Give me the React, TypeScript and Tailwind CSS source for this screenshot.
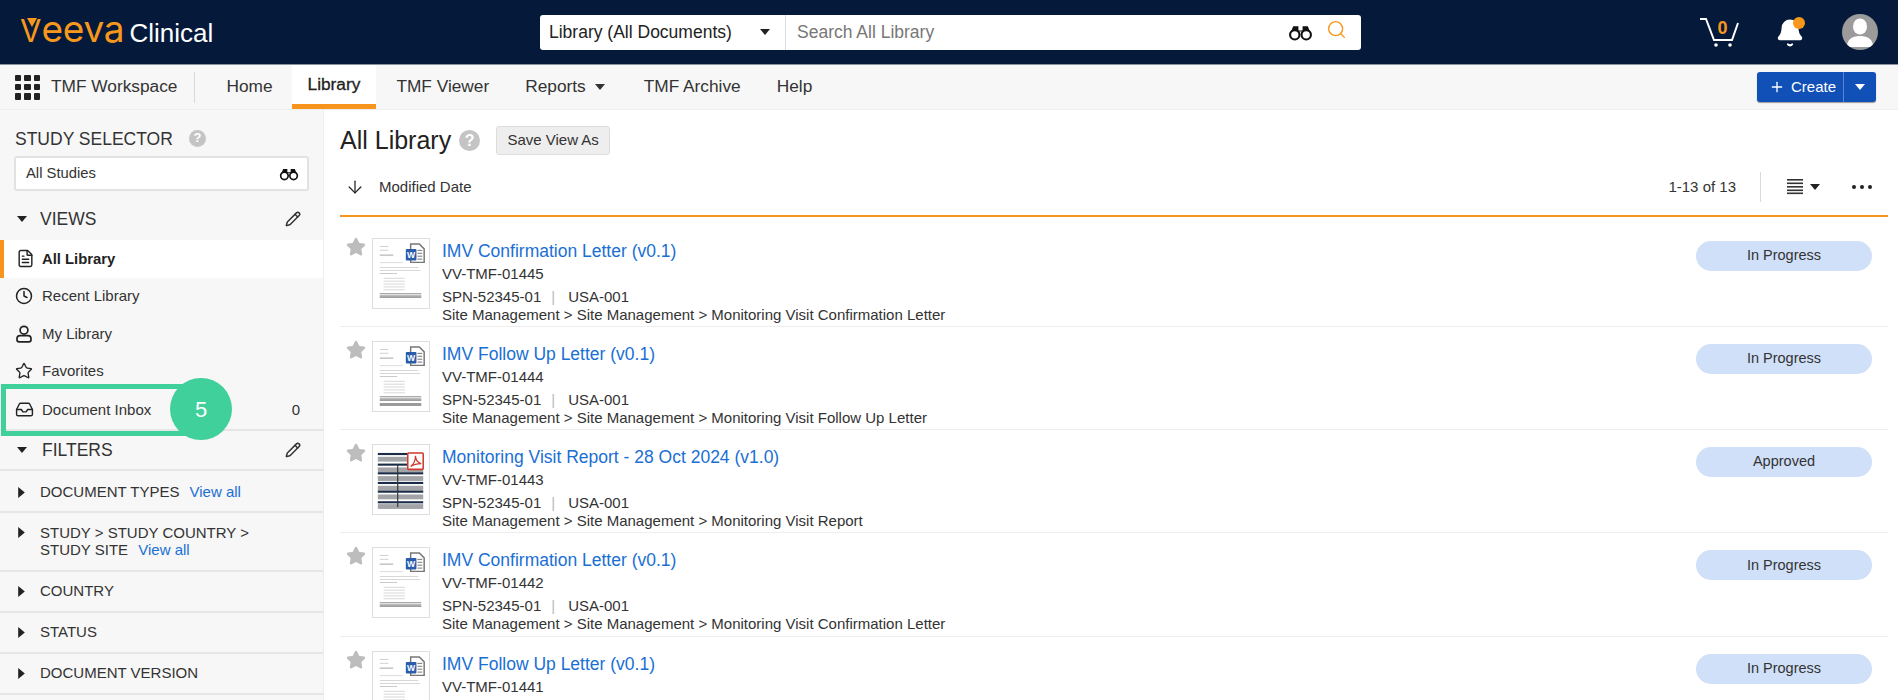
import React from "react";
import { ArrowDown, Bell, Clock, FileText, Inbox, Pencil, Plus, Search, Star } from "lucide-react";

const Caret = ({ className = "" }: { className?: string }) => (
  <svg viewBox="0 0 10 6" className={`w-[10px] h-[6px] ${className}`}><path d="M0 0h10L5 6z" fill="currentColor" /></svg>
);
const CaretRight = () => (
  <svg viewBox="0 0 6 10" className="w-[7px] h-[11px] text-[#222] shrink-0"><path d="M0 0v10l6-5z" fill="currentColor" /></svg>
);
const Binoculars = ({ className = "" }: { className?: string }) => (
  <svg viewBox="0 0 24 16" className={className}>
    <path d="M3 7l2-5h5v4h4V2h5l2 5z" fill="#111" />
    <circle cx="6.5" cy="10.2" r="4.5" fill="#fff" stroke="#111" strokeWidth="2" />
    <circle cx="17.5" cy="10.2" r="4.5" fill="#fff" stroke="#111" strokeWidth="2" />
  </svg>
);
const Help = ({ big = false }: { big?: boolean }) => (
  <span className={`inline-flex items-center justify-center rounded-full bg-[#c4c4c4] text-white font-bold ${big ? "w-[21px] h-[21px] text-[16px]" : "w-[17px] h-[17px] text-[13px]"}`}>?</span>
);
const PersonOutline = () => (
  <svg viewBox="0 0 18 18" className="w-[18px] h-[18px]" fill="none" stroke="#222" strokeWidth="1.7">
    <circle cx="9" cy="5.2" r="3.9" />
    <path d="M5 10.6h8c2 0 3 1.4 3 3v1.2c0 1.2-.8 2-2 2H4c-1.2 0-2-.8-2-2v-1.2c0-1.6 1-3 3-3z" />
  </svg>
);

const Grid = () => (
  <div className="grid grid-cols-3 gap-[3px] w-[25px] h-[25px]">
    {Array.from({ length: 9 }).map((_, i) => <span key={i} className="bg-[#222] rounded-[1px]" />)}
  </div>
);

const Thumb = ({ kind }: { kind: "word1" | "word2" | "pdf" }) => (
  <div className="relative w-[58px] h-[71px] bg-white border border-[#dedede] shrink-0 overflow-hidden">
    {kind === "pdf" ? (
      <svg viewBox="0 0 58 71" className="w-full h-full">
        {[12, 23, 32, 42, 51, 61].map((y) => <rect key={y} x="5" y={y} width="47" height="5" fill="#a2a4a8" />)}
        {[8, 19, 28, 38, 47, 58].map((y) => <rect key={y} x="5" y={y} width="47" height="2.2" fill="#1b2c48" />)}
        <rect x="25" y="20" width="1.2" height="44" fill="#333" />
        <rect x="36" y="8" width="16" height="17" fill="#fff" stroke="#cf3b2e" strokeWidth="1.6" rx="1" />
        <path d="M39 22c3-2 5-6 5-11 0 4 2 7 6 8-4 0-8 1-11 3z" fill="none" stroke="#cf3b2e" strokeWidth="1.3" />
      </svg>
    ) : (
      <svg viewBox="0 0 58 71" className="w-full h-full">
        {[7, 11].map((y) => <rect key={y} x="7" y={y} width="9" height="0.7" fill="#bbb" />)}
        <rect x="7" y="16" width="14" height="0.9" fill="#999" />
        <rect x="7" y="24" width="24" height="0.7" fill="#ccc" />
        <rect x="7" y="29" width="40" height="0.8" fill="#ccc" />
        <rect x="7" y="32" width="42" height="0.8" fill="#ccc" />
        <rect x="7" y="35" width="18" height="0.8" fill="#bbb" />
        {[40, 43, 46, 49, 52].map((y) => <rect key={y} x="11" y={y} width="22" height="0.8" fill="#ccc" />)}
        <rect x="7" y="56" width="43" height="1" fill="#888" />
        <rect x="7" y="58" width="43" height="2" fill="#aaa" />
        <rect x="7" y="60" width="43" height="0.8" fill="#888" />
        {kind === "word2" && <rect x="7" y="63" width="43" height="3" fill="#999" />}
        <path d="M39 5h9l5 5v14H39z" fill="#fff" stroke="#777" strokeWidth="1.5" />
        {[11, 14, 17, 20].map((y) => <rect key={y} x="46" y={y} width="5" height="1.2" fill="#888" />)}
        <rect x="34" y="10" width="11" height="12" fill="#2a5cab" rx="1" />
        <text x="39.5" y="19.5" textAnchor="middle" fontSize="9" fontWeight="700" fill="#fff" fontFamily="Liberation Sans">W</text>
      </svg>
    )}
  </div>
);

const rows = [
  { t: "IMV Confirmation Letter (v0.1)", id: "VV-TMF-01445", p: "Site Management > Site Management > Monitoring Visit Confirmation Letter", s: "In Progress", k: "word1" as const },
  { t: "IMV Follow Up Letter (v0.1)", id: "VV-TMF-01444", p: "Site Management > Site Management > Monitoring Visit Follow Up Letter", s: "In Progress", k: "word2" as const },
  { t: "Monitoring Visit Report - 28 Oct 2024 (v1.0)", id: "VV-TMF-01443", p: "Site Management > Site Management > Monitoring Visit Report", s: "Approved", k: "pdf" as const },
  { t: "IMV Confirmation Letter (v0.1)", id: "VV-TMF-01442", p: "Site Management > Site Management > Monitoring Visit Confirmation Letter", s: "In Progress", k: "word1" as const },
  { t: "IMV Follow Up Letter (v0.1)", id: "VV-TMF-01441", p: "Site Management > Site Management > Monitoring Visit Follow Up Letter", s: "In Progress", k: "word2" as const },
];

const views = [
  { l: "Recent Library", i: <Clock size={18} strokeWidth={2} color="#222" /> },
  { l: "My Library", i: <PersonOutline /> },
  { l: "Favorites", i: <Star size={18} strokeWidth={1.8} color="#222" /> },
];

const filters = ["COUNTRY", "STATUS", "DOCUMENT VERSION"];

export default function App() {
  return (
    <div className="w-[1898px] h-[700px] overflow-hidden bg-white text-[#333] font-['Liberation_Sans',Arial,sans-serif]">
      {/* Header */}
      <header className="h-[65px] bg-[#051a3a] border-b border-[#8b93a1] flex items-center relative">
        <div className="ml-[20px] flex items-baseline w-[520px]">
          <span className="relative text-[#f7981d] font-['Inter',sans-serif] font-normal leading-[40px]">
            <span className="text-[31px]">V</span><span className="text-[37px] tracking-[-0.2px]">eeva</span>
            <svg viewBox="0 0 10 9" className="absolute left-[7px] top-[9px] w-[10px] h-[9px]"><path d="M0 0h10L5 9z" fill="#f7981d" /></svg>
          </span>
          <span className="ml-[5px] text-white text-[26px] leading-[40px]">Clinical</span>
        </div>
        <div className="h-[35px] w-[821px] bg-white rounded-[3px] flex items-center">
          <div className="w-[246px] h-full border-r border-[#dcdce8] flex items-center justify-between pl-[9px] pr-[15px] text-[17.5px] text-[#222]">
            <span>Library (All Documents)</span>
            <Caret className="text-[#222]" />
          </div>
          <span className="ml-[11px] flex-1 text-[17.5px] text-[#777]">Search All Library</span>
          <Binoculars className="w-[25px] h-[17px] mr-[13px]" />
          <Search size={21} strokeWidth={1.6} color="#f7981d" className="mr-[14px] -mt-[5px]" />
        </div>
        <div className="ml-auto mr-[20px] flex items-center">
          <svg viewBox="0 0 40 30" className="w-[40px] h-[30px]" fill="none" stroke="#fff" strokeWidth="2">
            <path d="M1 2h6l8 21h18l6-17" />
            <circle cx="17" cy="28" r="1.8" fill="#fff" stroke="none" />
            <circle cx="31" cy="28" r="1.8" fill="#fff" stroke="none" />
            <text x="23.5" y="17" textAnchor="middle" fontSize="18" fontWeight="700" fill="#f7981d" stroke="none" fontFamily="Liberation Sans">0</text>
          </svg>
          <div className="relative ml-[36px] w-[30px] h-[30px] pt-[1px]">
            <Bell size={30} fill="#fff" color="#fff" strokeWidth={1.5} />
            <span className="absolute top-0 left-[18px] w-[12px] h-[12px] rounded-full bg-[#f7981d]" />
          </div>
          <svg viewBox="0 0 36 36" className="ml-[37px] w-[36px] h-[36px]">
            <defs><clipPath id="av"><circle cx="18" cy="18" r="18" /></clipPath></defs>
            <circle cx="18" cy="18" r="18" fill="#9b9b9b" />
            <g clipPath="url(#av)" fill="#fff">
              <ellipse cx="18" cy="12.5" rx="7" ry="8" />
              <path d="M5 33c0-7 4-11 13-11s13 4 13 11z" />
            </g>
          </svg>
        </div>
      </header>

      {/* Nav */}
      <nav className="h-[45px] bg-[#f7f7f7] border-b border-[#eeeeee] flex items-center text-[17.3px] text-[#333]">
        <div className="ml-[15px] mr-[11px]"><Grid /></div>
        <span>TMF Workspace</span>
        <span className="ml-[17px] mr-[13px] w-px h-[31px] bg-[#d9d9d9]" />
        <a className="pl-[18px] pr-[17px]">Home</a>
        <a className="mx-[2px] px-[16px] h-[44px] flex items-center bg-white border-b-[5px] border-[#f7941d] text-[#222] [-webkit-text-stroke:0.3px_#222]">Library</a>
        <a className="px-[18px]">TMF Viewer</a>
        <a className="pl-[18px] pr-[21px] flex items-center gap-[9px]">Reports <Caret /></a>
        <a className="px-[18px]">TMF Archive</a>
        <a className="px-[18px]">Help</a>
        <div className="ml-auto mr-[22px] h-[30px] w-[119px] flex rounded-[3px] bg-[#1150b7] text-white text-[15px] shadow-[0_1px_1px_#999]">
          <div className="w-[87px] flex items-center pl-[12px] gap-[6px] border-r border-[#5b86cf]">
            <Plus size={16} strokeWidth={2} />Create
          </div>
          <div className="flex-1 flex items-center justify-center"><Caret /></div>
        </div>
      </nav>

      <div className="flex h-[590px]">
        {/* Sidebar */}
        <aside className="w-[324px] shrink-0 bg-[#f7f7f7] border-r border-[#eeeeee] pt-[19px]">
          <div className="flex items-center pl-[15px] text-[17.5px] leading-[20px] text-[#333]">
            STUDY SELECTOR <span className="ml-[16px] -mt-[2px] flex"><Help /></span>
          </div>
          <div className="mt-[7px] mx-[14px] h-[35px] w-[295px] bg-white border-2 border-[#e2e2e2] rounded-[3px] flex items-center justify-between pl-[10px] pr-[8px] text-[14.8px]">
            All Studies <Binoculars className="w-[20px] h-[14px]" />
          </div>
          <div className="mt-[18px] h-[20px] flex items-center pl-[17px] pr-[22px] text-[17.5px]">
            <Caret className="text-[#222]" />
            <span className="ml-[13px]">VIEWS</span>
            <Pencil size={16} color="#333" strokeWidth={2.2} className="ml-auto" />
          </div>

          <div className="mt-[11px]">
            <div className="h-[37.5px] bg-white border-l-4 border-[#f7941d] flex items-center pl-[12px] text-[14.8px] font-bold text-[#222]">
              <FileText size={19} strokeWidth={1.8} color="#222" />
              <span className="ml-[7px]">All Library</span>
            </div>
            {views.map((v) => (
              <div key={v.l} className="h-[37.5px] flex items-center pl-[15px] text-[15px]">
                <span className="w-[18px] flex">{v.i}</span>
                <span className="ml-[9px]">{v.l}</span>
              </div>
            ))}
            <div className="relative h-[37.5px] flex items-center pl-[15px] pr-[23px] pt-[2px] text-[15px]">
              <Inbox size={19} strokeWidth={1.8} color="#222" />
              <span className="ml-[8px]">Document Inbox</span>
              <span className="ml-auto">0</span>
              <span className="absolute left-[1px] top-[-6px] w-[190px] h-[52px] border-[5px] border-[#3fd09c]" />
              <span className="absolute left-[170px] top-[-12px] w-[62px] h-[62px] rounded-full bg-[#3fd09c] text-white text-[22px] flex items-center justify-center">5</span>
            </div>
          </div>

          <div className="mt-[1.5px] border-t-2 border-[#e6e6e6] h-[42px] border-b-2 flex items-center pl-[17px] pr-[22px] text-[17.5px] box-border">
            <Caret className="text-[#222]" />
            <span className="ml-[15px]">FILTERS</span>
            <Pencil size={16} color="#333" strokeWidth={2.2} className="ml-auto" />
          </div>
          <div className="h-[42px] border-b-2 border-[#e6e6e6] flex items-center pl-[18px] pt-[2px] text-[15px]">
            <CaretRight />
            <span className="ml-[15px]">DOCUMENT TYPES</span>
            <a className="ml-[10px] text-[#1a6fd4]">View all</a>
          </div>
          <div className="h-[59px] border-b-2 border-[#e6e6e6] flex items-start pl-[18px] pt-[11px] text-[15px] leading-[17px]">
            <span className="mt-[3px] flex"><CaretRight /></span>
            <span className="ml-[15px]">STUDY &gt; STUDY COUNTRY &gt;<br />STUDY SITE <a className="ml-[6px] text-[#1a6fd4]">View all</a></span>
          </div>
          {filters.map((f) => (
            <div key={f} className="h-[41px] border-b-2 border-[#e6e6e6] flex items-center pl-[18px] text-[15px]">
              <CaretRight />
              <span className="ml-[15px]">{f}</span>
            </div>
          ))}
        </aside>

        {/* Main */}
        <main className="flex-1 pl-[16px] pr-[10px] overflow-hidden">
          <div className="mt-[16px] h-[29px] flex items-center">
            <h1 className="text-[25px] text-[#222] pt-[1px]">All Library</h1>
            <span className="ml-[8px] flex"><Help big /></span>
            <button className="ml-[16px] w-[114px] h-[29px] bg-[#eeeeee] border border-[#dddddd] rounded-[3px] text-[15px] text-[#333]">Save View As</button>
          </div>
          <div className="mt-[15px] h-[34px] flex items-center text-[15px]">
            <ArrowDown size={20} strokeWidth={1.5} color="#222" className="ml-[5px]" />
            <span className="ml-[14px]">Modified Date</span>
            <span className="ml-auto">1-13 of 13</span>
            <span className="ml-[24px] w-px h-[30px] bg-[#d9d9d9]" />
            <svg viewBox="0 0 16 16" className="ml-[26px] w-[16px] h-[16px]" fill="#333">
              {[1, 4.5, 8, 11.5, 14.5].map((y) => <rect key={y} x="0" y={y - 1} width="16" height="1.6" />)}
            </svg>
            <Caret className="ml-[7px] text-[#222]" />
            <span className="ml-[32px] mr-[16px] flex gap-[4px]">
              {[0, 1, 2].map((i) => <span key={i} className="w-[4px] h-[4px] rounded-full bg-[#222]" />)}
            </span>
          </div>
          <div className="mt-[11px] h-[2px] bg-[#f7941d]" />
          <div className="mt-[6.5px]">
            {rows.map((r) => (
              <div key={r.id} className="h-[103.3px] border-b border-[#eeeeee] flex pt-[14px]">
                <Star size={20} fill="#bdbdbd" color="#bdbdbd" className="ml-[6px] mr-[6px] -mt-[1px] shrink-0" />
                <Thumb kind={r.k} />
                <div className="ml-[12px] flex-1 text-[15px] text-[#333]">
                  <a className="block pt-[1px] text-[17.5px] leading-[24px] text-[#1a6fd4]">{r.t}</a>
                  <div className="mt-[2px] leading-[18px]">{r.id}</div>
                  <div className="mt-[5px] leading-[18px]">SPN-52345-01<span className="ml-[10px] mr-[13px] text-[#bbb]">|</span>USA-001</div>
                  <div className="leading-[18px]">{r.p}</div>
                </div>
                <div className="mr-[16px] mt-[3px] w-[176px] h-[30px] rounded-full bg-[#d0e0f8] flex items-center justify-center text-[14.5px] text-[#333]">{r.s}</div>
              </div>
            ))}
          </div>
        </main>
      </div>
    </div>
  );
}
